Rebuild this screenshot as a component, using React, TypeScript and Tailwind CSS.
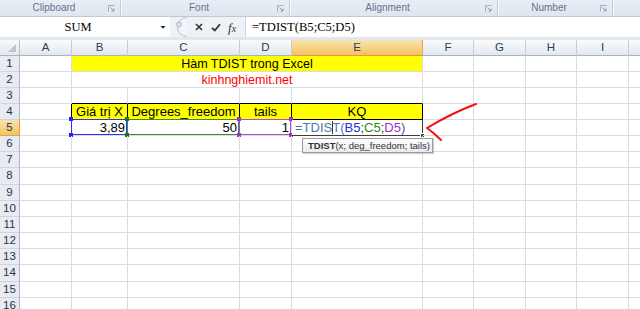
import React from "react";

type Col = { id: string; w: string };

const COLS: Col[] = [
  { id: "A", w: "w-[52px]" },
  { id: "B", w: "w-[56px]" },
  { id: "C", w: "w-[112px]" },
  { id: "D", w: "w-[52px]" },
  { id: "E", w: "w-[131px]" },
  { id: "F", w: "w-[51px]" },
  { id: "G", w: "w-[52px]" },
  { id: "H", w: "w-[51px]" },
  { id: "I", w: "w-[52px]" },
  { id: "J", w: "w-[52px]" },
];

// the screenshot is slightly scaled, so two rows come out a pixel taller
const ROW_H = [
  "h-[16px]", "h-[16px]", "h-[16px]", "h-[16px]", "h-[16px]", "h-[16px]", "h-[16px]", "h-[17px]",
  "h-[16px]", "h-[16px]", "h-[16px]", "h-[16px]", "h-[16px]", "h-[17px]", "h-[16px]", "h-[16px]",
];

const GROUPS = [
  { label: "Clipboard", w: "w-[121px]" },
  { label: "Font", w: "w-[169px]" },
  { label: "Alignment", w: "w-[208px]" },
  { label: "Number", w: "w-[115px]" },
];

function Launcher() {
  return (
    <svg width="7" height="7" viewBox="0 0 7 7" className="mr-[5px] shrink-0">
      <path d="M0.5 6.5V0.5H6.5" fill="none" stroke="#a3adbb" />
      <path d="M2.5 2.5L6 6M6 3.5V6H3.5" fill="none" stroke="#8d99aa" />
    </svg>
  );
}

function Ribbon() {
  return (
    <div className="flex h-[17px] border-b border-[#bfcad8] bg-linear-to-b from-[#e9eef5] to-[#dfe6ef]">
      {GROUPS.map((g) => (
        <div
          key={g.label}
          className={`${g.w} shrink-0 flex items-center border-r border-r-[#c3cdda] shadow-[1px_0_0_#f4f7fb]`}
        >
          <span className="flex-1 text-center text-[10px] leading-none text-[#637390]">{g.label}</span>
          <Launcher />
        </div>
      ))}
      <div className="flex-1" />
    </div>
  );
}

function FormulaBar() {
  return (
    <div className="flex h-[20px] bg-[#eef1f5]">
      <div className="w-[170px] shrink-0 flex items-center bg-white">
        <span className="flex-1 text-center font-['Liberation_Serif',serif] text-[12.5px] text-black">SUM</span>
        <svg width="14" height="5" viewBox="0 0 14 5">
          <path d="M4.5 1H9.5L7 3.8Z" fill="#222" />
        </svg>
      </div>
      <div className="w-[20px] shrink-0">
        <svg width="20" height="20" viewBox="0 0 20 20">
          <path d="M17 0.5A9.5 9.5 0 0 0 17 19.5" fill="#f3f5f8" stroke="#b7c0cc" />
          <circle cx="9" cy="7.5" r="2.5" fill="#dde1e7" stroke="#b3bbc6" />
        </svg>
      </div>
      <div className="w-[55px] shrink-0 flex items-center">
        <svg width="8" height="8" viewBox="0 0 8 8" className="ml-[5px]">
          <path d="M1 1L7 7M7 1L1 7" stroke="#333" strokeWidth="1.6" />
        </svg>
        <svg width="10" height="9" viewBox="0 0 10 9" className="ml-[8px]">
          <path d="M1 4.8L3.8 7.5L9 1.2" fill="none" stroke="#333" strokeWidth="1.8" />
        </svg>
        <span className="ml-[7px] font-['Liberation_Serif',serif] italic text-[13px] leading-none text-[#333]">
          f<span className="text-[10px]">x</span>
        </span>
      </div>
      <div className="flex-1 flex items-center bg-white border-l border-[#c9d1dc] pl-[6px]">
        <span className="font-['Liberation_Serif',serif] text-[12.6px] text-black">=TDIST(B5;C5;D5)</span>
      </div>
    </div>
  );
}

function ColumnHeader() {
  return (
    <div className="flex h-[16px]">
      <div className="w-[20px] shrink-0 h-full border-r border-b border-r-[#b2c0cf] border-b-[#9eb6ce] bg-linear-to-b from-[#f7f8fa] to-[#e4e8ed] flex items-end justify-end">
        <svg width="10" height="10" viewBox="0 0 10 10" className="mr-[2px] mb-[2px]">
          <path d="M9 1V9H1Z" fill="#bcc4ce" />
        </svg>
      </div>
      {COLS.map((c) => (
        <div
          key={c.id}
          className={`${c.w} shrink-0 h-full flex items-center justify-center border-r border-b text-[11.5px] text-[#2b3e55] ${
            c.id === "E"
              ? "bg-linear-to-b from-[#fae3ae] to-[#f2c25d] border-r-[#e1a64a] border-b-[#f29536]"
              : "bg-linear-to-b from-[#f9fafb] to-[#e4e8ed] border-r-[#c5ccd6] border-b-[#9eb6ce]"
          }`}
        >
          {/* J sits past the window edge, its letter is never seen */}
          {c.id === "J" ? null : c.id}
        </div>
      ))}
    </div>
  );
}

function RowHead({ n }: { n: number }) {
  return (
    <div
      className={`w-[20px] shrink-0 h-full flex items-center justify-center border-r border-b text-[11.5px] text-[#22354f] ${
        n === 5
          ? "bg-linear-to-b from-[#fae3ae] to-[#f2c25d] border-r-[#f29536] border-b-[#e1a64a]"
          : "bg-[#e8ecf1] border-r-[#a9b7c6] border-b-[#cfd6df]"
      }`}
    >
      {n}
    </div>
  );
}

function Cell({
  w,
  r = "border-r-[#dadcdd]",
  b = "border-b-[#dadcdd]",
  className = "",
  children,
}: {
  w: string;
  r?: string;
  b?: string;
  className?: string;
  children?: React.ReactNode;
}) {
  return (
    <div className={`relative shrink-0 h-full border-r border-b ${w} ${r} ${b} ${className}`}>{children}</div>
  );
}

// coloured box Excel draws round each range referenced by the formula
function RangeBox({ border, dot }: { border: string; dot: string }) {
  return (
    <div className={`absolute -left-px -top-px right-0 bottom-0 border ${border}`}>
      <div className={`absolute -left-[3px] -top-[3px] w-1 h-1 ${dot}`} />
      <div className={`absolute -right-[3px] -top-[3px] w-1 h-1 ${dot}`} />
      <div className={`absolute -left-[3px] -bottom-[3px] w-1 h-1 ${dot}`} />
      <div className={`absolute -right-[3px] -bottom-[3px] w-1 h-1 ${dot}`} />
    </div>
  );
}

function EmptyCells({ from }: { from: number }) {
  return (
    <>
      {COLS.slice(from).map((c) => (
        <Cell key={c.id} w={c.w} />
      ))}
    </>
  );
}

function Row({ n, children }: { n: number; children: React.ReactNode }) {
  return (
    <div className={`flex ${ROW_H[n - 1]}`}>
      <RowHead n={n} />
      {children}
    </div>
  );
}

const HEAD = "bg-[#ffff00] text-center text-[13px] leading-[16px] text-black whitespace-nowrap";
const NUM = "text-right pr-[2px] text-[13px] leading-[16px] text-black";

function Sheet() {
  return (
    <div>
      <ColumnHeader />
      <Row n={1}>
        <Cell w="w-[52px]" />
        <Cell w="w-[351px]" className="bg-[#ffff00] text-center text-[12.5px] leading-[16px] text-black">
          Hàm TDIST trong Excel
        </Cell>
        <EmptyCells from={5} />
      </Row>
      <Row n={2}>
        <Cell w="w-[52px]" />
        <Cell w="w-[351px]" className="text-center text-[12.5px] leading-[16px] text-[#ff0000]">
          kinhnghiemit.net
        </Cell>
        <EmptyCells from={5} />
      </Row>
      <Row n={3}>
        <Cell w="w-[52px]" />
        <Cell w="w-[56px]" b="border-b-black" />
        <Cell w="w-[112px]" b="border-b-black" />
        <Cell w="w-[52px]" b="border-b-black" />
        <Cell w="w-[131px]" b="border-b-black" />
        <EmptyCells from={5} />
      </Row>
      <Row n={4}>
        <Cell w="w-[52px]" r="border-r-black" />
        <Cell w="w-[56px]" r="border-r-black" b="border-b-black" className={HEAD}>
          Giá trị X
        </Cell>
        <Cell w="w-[112px]" r="border-r-black" b="border-b-black" className={HEAD}>
          Degrees_freedom
        </Cell>
        <Cell w="w-[52px]" r="border-r-black" b="border-b-black" className={HEAD}>
          tails
        </Cell>
        <Cell w="w-[131px]" r="border-r-black" b="border-b-black" className={HEAD}>
          KQ
        </Cell>
        <EmptyCells from={5} />
      </Row>
      <Row n={5}>
        <Cell w="w-[52px]" />
        <Cell w="w-[56px]" className={NUM}>
          3,89
          <RangeBox border="border-[#2f2ff5]" dot="bg-[#2020ff]" />
        </Cell>
        <Cell w="w-[112px]" className={NUM}>
          50
          <RangeBox border="border-[#3c8c3c]" dot="bg-[#117a11]" />
        </Cell>
        <Cell w="w-[52px]" className={NUM}>
          1
          <RangeBox border="border-[#a64fd6]" dot="bg-[#9b2fd0]" />
        </Cell>
        <Cell
          w="w-[131px]"
          r="border-r-[#3d3d3d]"
          b="border-b-[#3d3d3d]"
          className="pl-[3px] text-[13px] leading-[16px] whitespace-nowrap bg-white"
        >
          <span className="text-[#4a7aab]">=TDIS</span>
          <span className="inline-block w-px h-[13px] -mr-px bg-[#333] align-[-2px]" />
          <span className="text-[#4a7aab]">T(</span>
          <span className="text-[#2b2bdb]">B5</span>
          <span className="text-[#333]">;</span>
          <span className="text-[#1f8a1f]">C5</span>
          <span className="text-[#333]">;</span>
          <span className="text-[#9b34c8]">D5</span>
          <span className="text-[#35608f]">)</span>
          <div className="absolute -right-[3px] -bottom-[3px] w-[5px] h-[5px] bg-[#3d3d3d] border border-white" />
        </Cell>
        <EmptyCells from={5} />
      </Row>
      {[6, 7, 8, 9, 10, 11, 12, 13, 14, 15, 16].map((n) => (
        <Row key={n} n={n}>
          <EmptyCells from={0} />
        </Row>
      ))}
    </div>
  );
}

export default function App() {
  return (
    <div className="relative w-[640px] h-[309px] overflow-hidden bg-white font-['Liberation_Sans',Arial,sans-serif]">
      <Ribbon />
      <FormulaBar />
      <div className="h-[3px] bg-[#e2e7ee]" />
      <Sheet />

      {/* function argument tip under the edited cell */}
      <div className="absolute left-[302px] top-[138px] h-[15px] w-[131px] border border-[#9a9a9a] bg-linear-to-b from-white to-[#e9eaf0] px-[5px] text-[9.5px] leading-[13px] text-[#333] whitespace-nowrap shadow-[1px_1px_1px_rgba(0,0,0,0.18)]">
        <b>TDIST</b>(x; deg_freedom; tails)
      </div>

      {/* hand drawn red arrow */}
      <svg className="absolute left-0 top-0 pointer-events-none" width="640" height="309" viewBox="0 0 640 309">
        <path
          d="M476 104Q452 113 427 128Q434 133 441 140"
          fill="none"
          stroke="#f01010"
          strokeWidth="2"
          strokeLinecap="round"
          strokeLinejoin="round"
        />
      </svg>
    </div>
  );
}
